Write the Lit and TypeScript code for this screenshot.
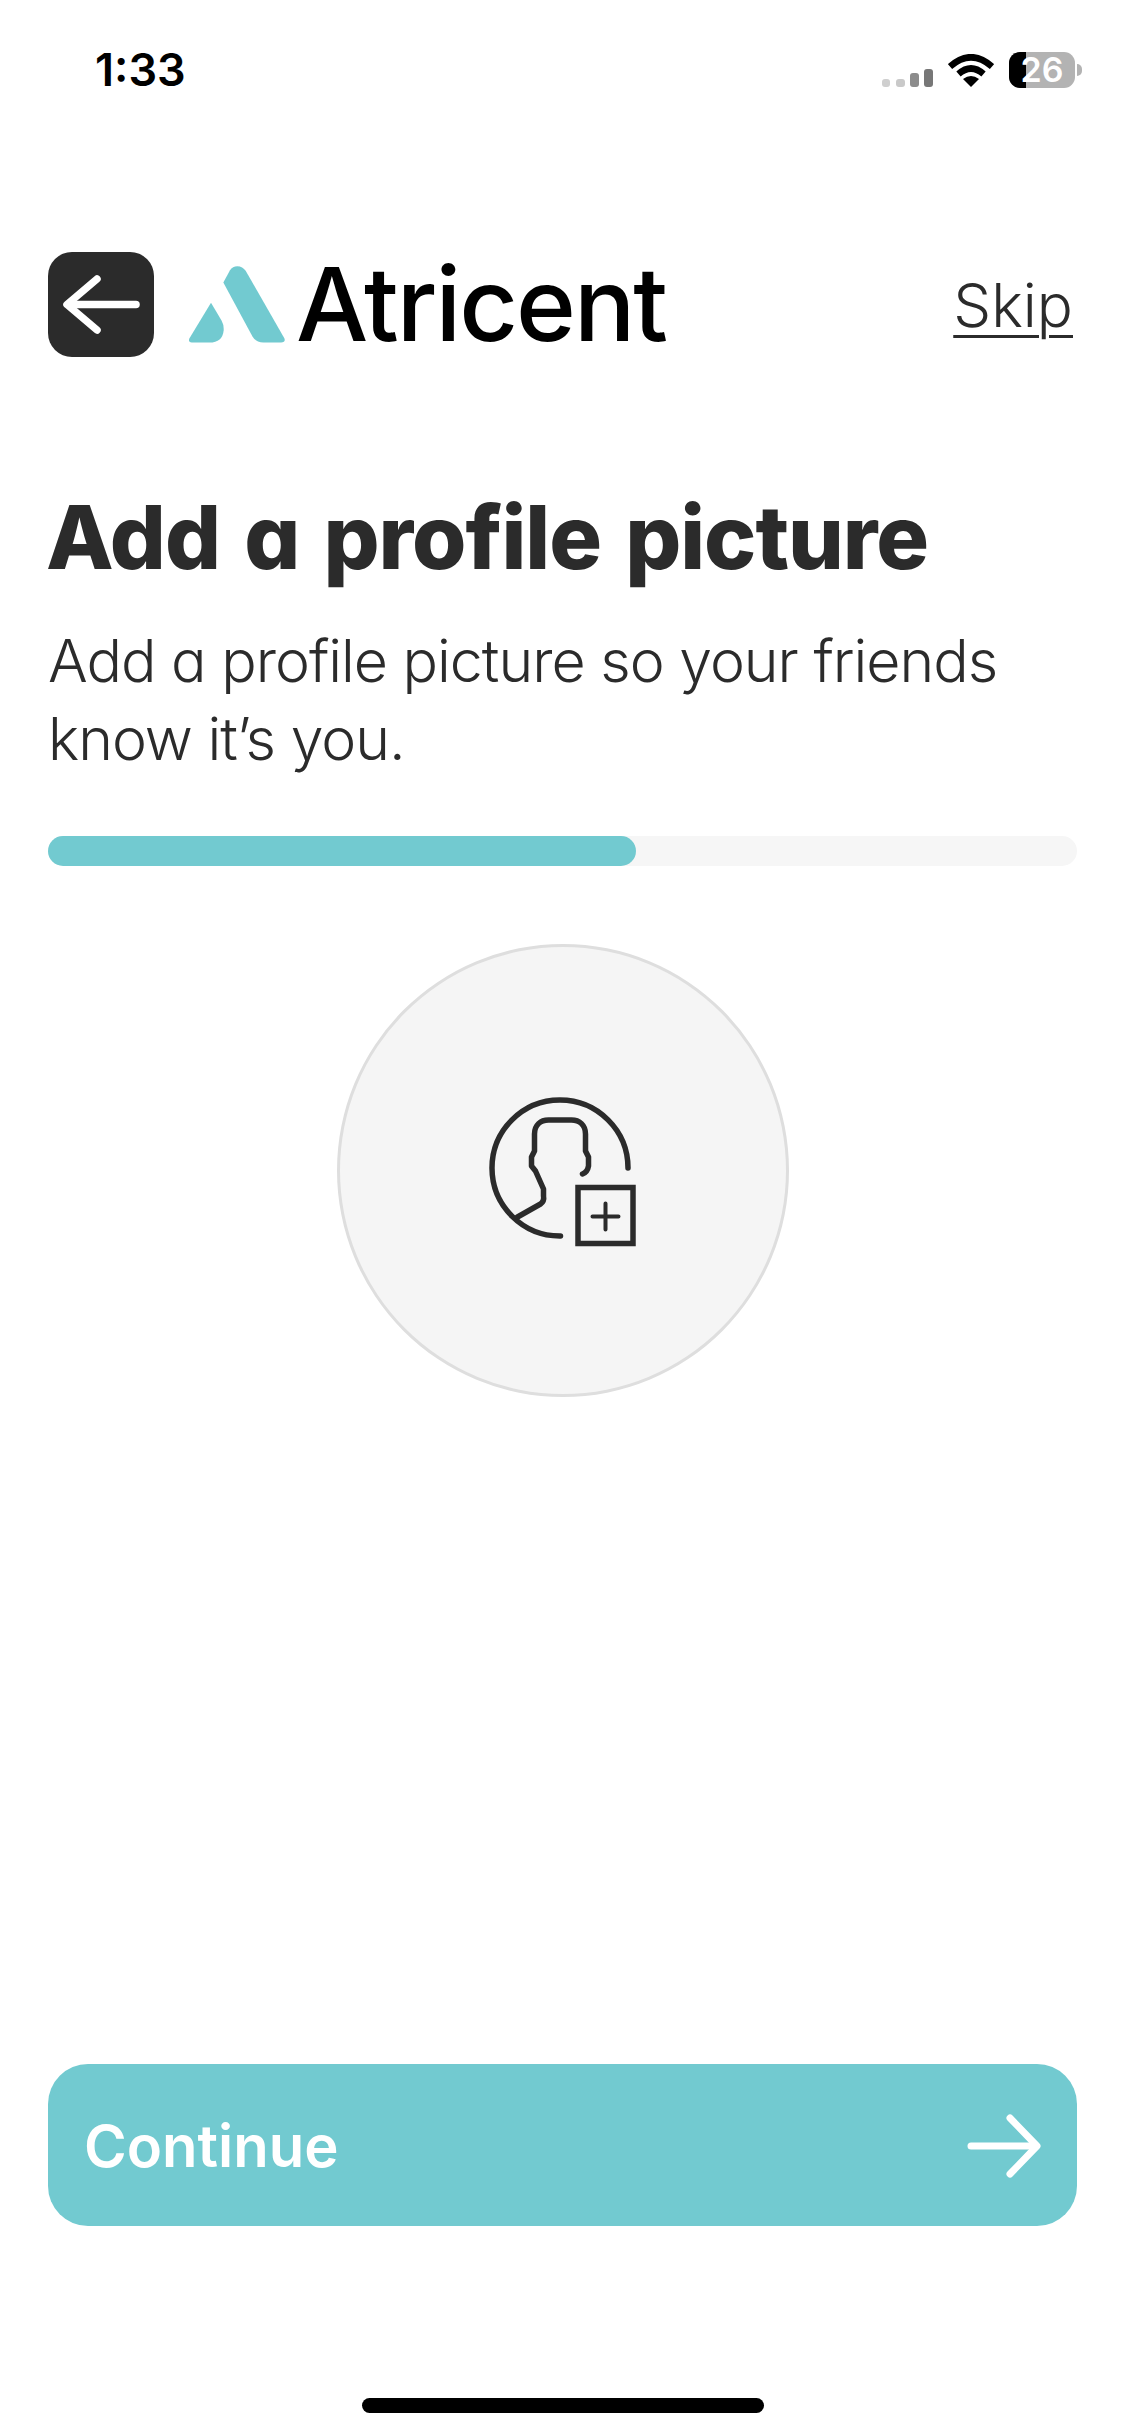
import {LitElement, html, css} from 'lit';
import {customElement} from 'lit/decorators.js';

@customElement('app-root')
class AppRoot extends LitElement {

    render() {
        return html`
            <div class="status">
                <span class="time">1:33</span>
                <div class="status-icons">
                    <svg class="signal" width="51" height="18" viewBox="0 0 51 18">
                        <rect x="0" y="10" width="8" height="8" rx="3" fill="#cfcfcf"/>
                        <rect x="14" y="10" width="9" height="8" rx="3" fill="#c9c9c9"/>
                        <rect x="28" y="4" width="9" height="14" rx="3" fill="#8c8c8c"/>
                        <rect x="42" y="0" width="9" height="18" rx="3" fill="#777"/>
                    </svg>
                    <svg class="wifi" width="46" height="33" viewBox="0 0 46 33">
                        <path d="M2 12.5 Q23 -6 44 12.5" fill="none" stroke="#000" stroke-width="6.5"/>
                        <path d="M10.5 20 Q23 9 35.5 20" fill="none" stroke="#000" stroke-width="6.5"/>
                        <path d="M15 25 Q23 19 31 25 L23 33 Z" fill="#000"/>
                    </svg>
                    <div class="battery">
                        <div class="battery-fill"></div>
                        <span class="battery-label">26</span>
                    </div>
                    <div class="battery-nub"></div>
                </div>
            </div>

            <div class="header">
                <button class="back">
                    <svg width="106" height="105" viewBox="0 0 106 105" fill="none" stroke="#fff" stroke-linecap="round" stroke-linejoin="round">
                        <path d="M24 52.5H88" stroke-width="7.5"/>
                        <path d="M49 27L19 52.5L49 78" stroke-width="7.5"/>
                    </svg>
                </button>
                <svg class="mark" width="97" height="77" viewBox="27 48 291 230" fill="#72cad0">
                    <path d="M130 97L150 60Q158 48 172 48Q188 48 197 62L313 264Q318 277 303 277H250Q228 277 217 258Z"/>
                    <path d="M93 158L125 212Q132 225 131 240Q128 277 88 277H35Q24 277 28 265Z"/>
                </svg>
                <span class="brand">Atricent</span>
                <a class="skip">Skip</a>
            </div>

            <h1>Add a profile picture</h1>
            <p class="lead">Add a profile picture so your friends<br>know it’s you.</p>

            <div class="track"><div class="fill"></div></div>

            <div class="avatar">
                <svg width="200" height="200" viewBox="2.5 0 200 200" fill="none" stroke="#2b2b2b" stroke-linecap="round" stroke-linejoin="round">
                    <path d="M167.5 97A68 68 0 1 0 100 165" stroke-width="5.5"/>
                    <path d="M57 146L80 133Q84 130 83 125V118L75 100L71 95V86L74 80V63C74 54 80 49 88 49H111C119 49 125 54 125 63V80L128 86V95Q127 101 122 103" stroke-width="5.5"/>
                    <rect x="117.5" y="116.5" width="55" height="56" stroke-width="5.5" stroke-linejoin="miter"/>
                    <path d="M132 145.5H158M145 132.5V158.5" stroke-width="4"/>
                </svg>
            </div>

            <button class="continue">
                <span>Continue</span>
                <svg width="76" height="64" viewBox="0 0 76 64" fill="none" stroke="#fff" stroke-width="7" stroke-linecap="round" stroke-linejoin="round">
                    <path d="M6 32H70"/>
                    <path d="M45 4L72 32L45 60"/>
                </svg>
            </button>

            <div class="home"></div>
        `;
    }

    static styles = css`

        :host {
            display: flex;
            flex-direction: column;
            width: 1125px;
            height: 2436px;
            background: #fff;
            color: #2b2b2b;
            font-family: "Inter", "Liberation Sans", sans-serif;
            font-feature-settings: "cv11";
            box-sizing: border-box;
            padding: 0 48px;
            overflow: hidden;
        }

        .status {
            display: flex;
            justify-content: space-between;
            align-items: center;
            height: 38px;
            margin-top: 51px;
            padding-left: 47px;
        }

        .time {
            font-family: "Inter", sans-serif;
            font-size: 45px;
            font-weight: 600;
            color: #000;
            line-height: 38px;
        }

        .status-icons {
            display: flex;
            align-items: flex-end;
            gap: 15px;
            margin-right: -5px;
            height: 38px;
        }

        .signal {
            margin-bottom: 2px;
        }

        .wifi {
            margin-bottom: 2px;
        }

        .battery {
            display: flex;
            position: relative;
            align-items: center;
            justify-content: center;
            width: 66px;
            height: 36px;
            border-radius: 11px;
            background: #b3b3b3;
            margin-bottom: 1px;
        }

        .battery-fill {
            position: absolute;
            left: 0;
            top: 0;
            bottom: 0;
            width: 17px;
            border-radius: 11px 0 0 11px;
            background: #000;
        }

        .battery-label {
            position: relative;
            font-family: "Inter", sans-serif;
            font-size: 34px;
            font-weight: 600;
            color: #fff;
            line-height: 36px;
        }

        .battery-nub {
            width: 5px;
            height: 12px;
            margin: 0 0 13px -13px;
            border-radius: 0 6px 6px 0;
            background: #b3b3b3;
        }

        .header {
            display: flex;
            align-items: center;
            margin-top: 163px;
            height: 105px;
        }

        .back {
            width: 106px;
            height: 105px;
            padding: 0;
            border: none;
            border-radius: 24px;
            background: #2b2b2b;
        }

        .back svg {
            display: block;
        }

        .mark {
            margin-left: 35px;
        }

        .brand {
            margin-left: 10px;
            font-size: 102px;
            font-weight: 550;
            line-height: 105px;
            letter-spacing: -2px;
            color: #000;
        }

        .skip {
            margin-left: auto;
            margin-right: 4px;
            font-size: 60px;
            font-weight: 300;
            text-decoration: underline;
            text-underline-offset: 8px;
            text-decoration-thickness: 3px;
        }

        h1 {
            margin: 130px 0 0 -2px;
            font-size: 88px;
            font-weight: 800;
            line-height: 100px;
            letter-spacing: -1.05px;
            word-spacing: 6px;
        }

        .lead {
            margin: 35px 0 0;
            font-size: 59px;
            font-weight: 300;
            line-height: 78px;
            letter-spacing: -1px;
        }

        .track {
            height: 30px;
            margin-top: 58px;
            border-radius: 15px;
            background: #f6f6f6;
        }

        .fill {
            width: 588px;
            height: 30px;
            border-radius: 15px;
            background: #72cad0;
        }

        .avatar {
            display: flex;
            align-items: center;
            justify-content: center;
            align-self: center;
            box-sizing: border-box;
            width: 452px;
            height: 453px;
            margin-top: 78px;
            border: 3px solid #dedede;
            border-radius: 50%;
            background: #f5f5f5;
        }

        .continue {
            display: flex;
            align-items: center;
            justify-content: space-between;
            flex: none;
            height: 162px;
            margin-top: auto;
            padding: 2px 36px 0;
            border: none;
            border-radius: 40px;
            background: #72cad0;
            color: #fff;
            font-family: inherit;
            font-feature-settings: inherit;
            font-size: 58px;
            font-weight: 600;
        }

        .home {
            flex: none;
            align-self: center;
            width: 402px;
            height: 15px;
            margin-top: 172px;
            margin-bottom: 23px;
            border-radius: 8px;
            background: #000;
        }
    `;
}
